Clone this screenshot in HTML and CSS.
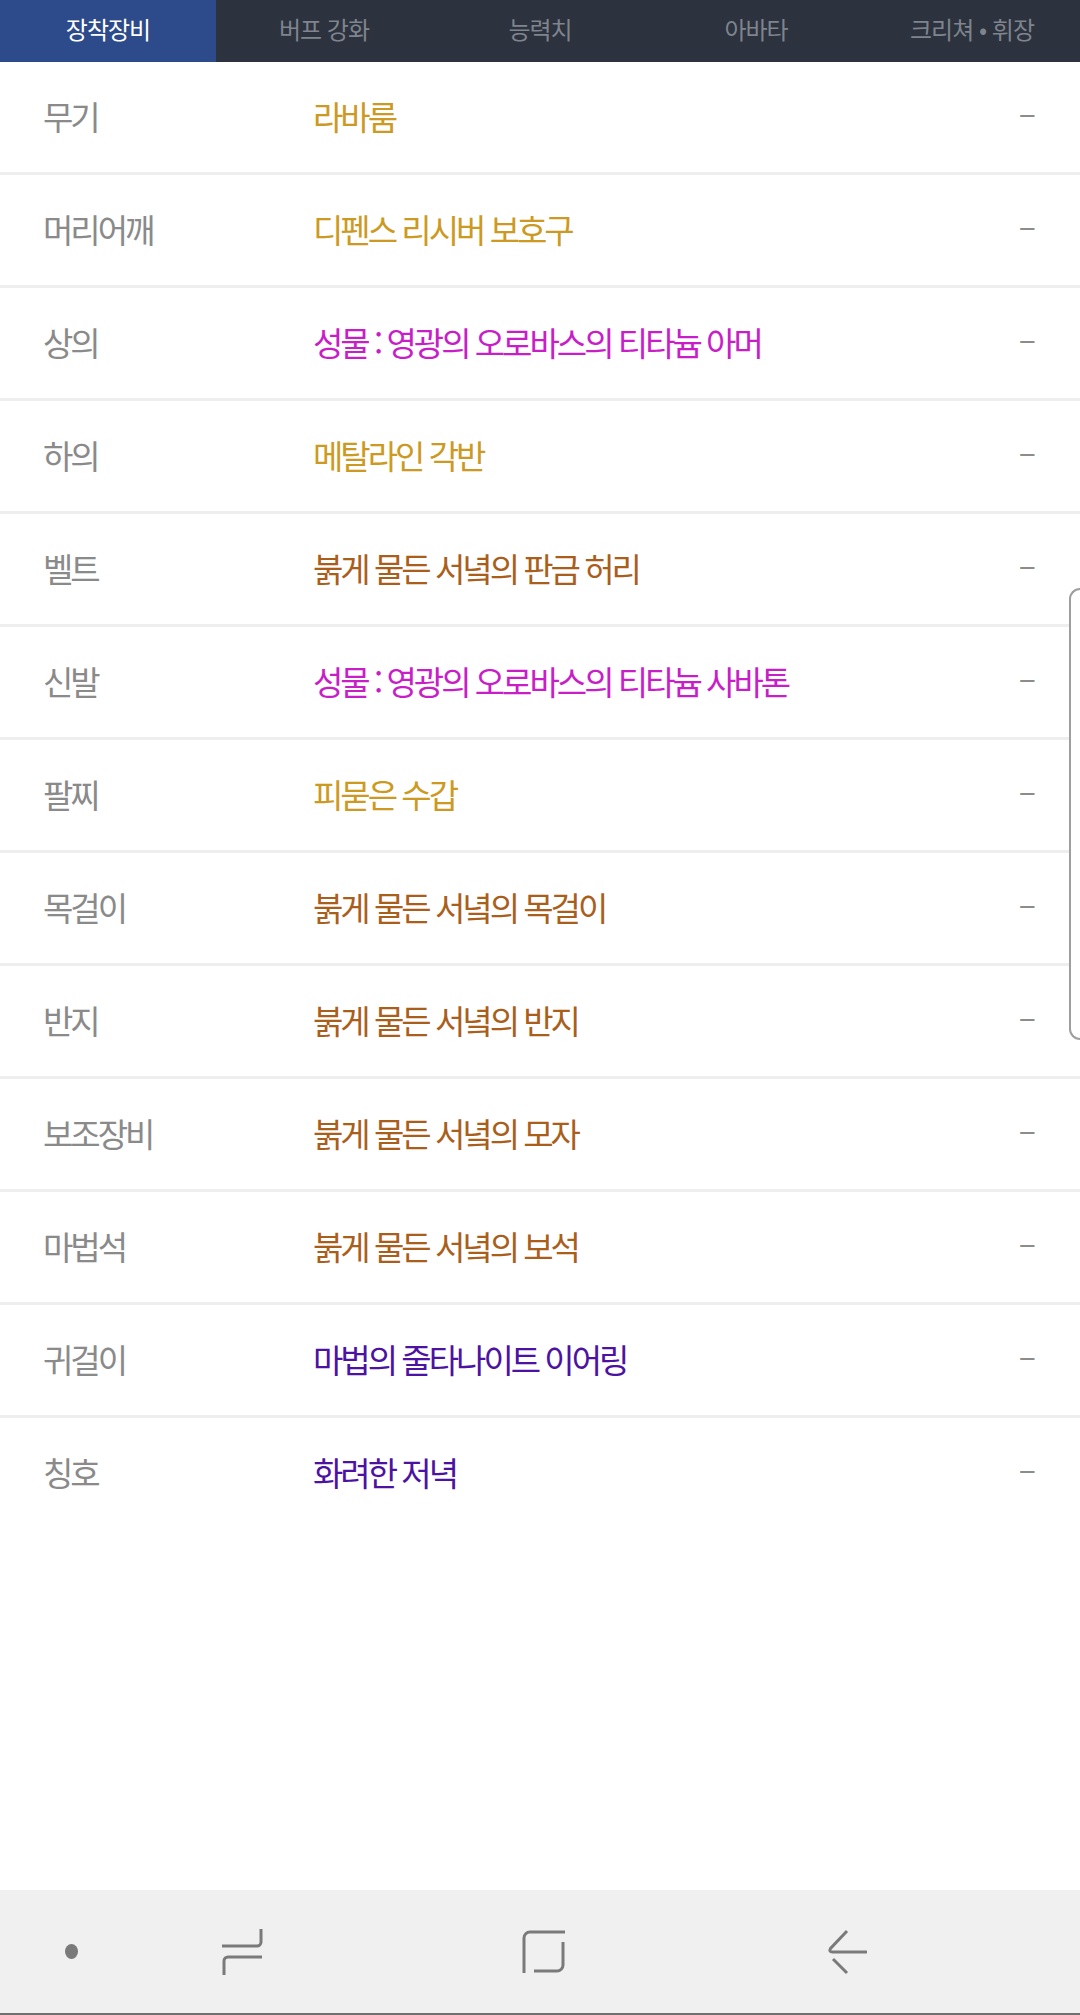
FILE: index.html
```html
<!DOCTYPE html>
<html lang="ko">
<head>
<meta charset="utf-8">
<title>장착장비</title>
<link rel="stylesheet" href="styles.css">
</head>
<body>
<div class="app">
  <nav class="tabs">
    <div class="tab active">장착장비</div>
    <div class="tab">버프 강화</div>
    <div class="tab">능력치</div>
    <div class="tab">아바타</div>
    <div class="tab">크리쳐 • 휘장</div>
  </nav>
  <div class="list">
    <div class="row"><span class="label">무기</span><span class="item unique">라바룸</span><span class="dash">–</span></div>
    <div class="row"><span class="label">머리어깨</span><span class="item unique">디펜스 리시버 보호구</span><span class="dash">–</span></div>
    <div class="row"><span class="label">상의</span><span class="item holy">성물 : 영광의 오로바스의 티타늄 아머</span><span class="dash">–</span></div>
    <div class="row"><span class="label">하의</span><span class="item unique">메탈라인 각반</span><span class="dash">–</span></div>
    <div class="row"><span class="label">벨트</span><span class="item legacy">붉게 물든 서녘의 판금 허리</span><span class="dash">–</span></div>
    <div class="row"><span class="label">신발</span><span class="item holy">성물 : 영광의 오로바스의 티타늄 사바톤</span><span class="dash">–</span></div>
    <div class="row"><span class="label">팔찌</span><span class="item unique">피묻은 수갑</span><span class="dash">–</span></div>
    <div class="row"><span class="label">목걸이</span><span class="item legacy">붉게 물든 서녘의 목걸이</span><span class="dash">–</span></div>
    <div class="row"><span class="label">반지</span><span class="item legacy">붉게 물든 서녘의 반지</span><span class="dash">–</span></div>
    <div class="row"><span class="label">보조장비</span><span class="item legacy">붉게 물든 서녘의 모자</span><span class="dash">–</span></div>
    <div class="row"><span class="label">마법석</span><span class="item legacy">붉게 물든 서녘의 보석</span><span class="dash">–</span></div>
    <div class="row"><span class="label">귀걸이</span><span class="item rare">마법의 줄타나이트 이어링</span><span class="dash">–</span></div>
    <div class="row last"><span class="label">칭호</span><span class="item rare">화려한 저녁</span><span class="dash">–</span></div>
  </div>
  <div class="spacer"></div>
  <div class="navbar">
    <span class="nav-dot"></span>
    <svg class="nav-recent" width="44" height="50" viewBox="0 0 44 50" fill="none" stroke="#7a7a7a" stroke-width="3">
      <path d="M41 2 V15 A4 4 0 0 1 37 19 H2"/>
      <path d="M42 30 H8 A4 4 0 0 0 4 34 V48"/>
    </svg>
    <svg class="nav-home" width="48" height="48" viewBox="0 0 48 48" fill="none" stroke="#7a7a7a" stroke-width="3">
      <path d="M4 45 V10 A6 6 0 0 1 10 4 H45"/>
      <path d="M43 14 V37 A6 6 0 0 1 37 43 H14"/>
    </svg>
    <svg class="nav-back" width="48" height="52" viewBox="0 0 48 52" fill="none" stroke="#7a7a7a" stroke-width="3">
      <path d="M23 5 L6.5 22.5 Q4.5 26 8.5 26 H43"/>
      <path d="M9 33 L23 47"/>
    </svg>
  </div>
  <div class="edge-handle"></div>
</div>
</body>
</html>
```
FILE: styles.css
```css
html, body {
  margin: 0;
  padding: 0;
  background: #ffffff;
}
body {
  font-family: "Noto Sans CJK KR", "Noto Sans", sans-serif;
  overflow: hidden;
}
.app {
  position: relative;
  width: 1080px;
  height: 2015px;
  display: flex;
  flex-direction: column;
}
.tabs {
  display: grid;
  grid-template-columns: repeat(5, 1fr);
  height: 62px;
  background: #2c323e;
}
.tab {
  display: flex;
  align-items: center;
  justify-content: center;
  color: #7f848d;
  font-size: 24px;
  letter-spacing: -1px;
  padding-bottom: 5px;
}
.tab.active {
  background: #2d4a8b;
  color: #ffffff;
}
.list {
  display: flex;
  flex-direction: column;
}
.row {
  display: flex;
  align-items: center;
  height: 110px;
  box-sizing: content-box;
  border-bottom: 3px solid #eeeeee;
  padding: 0 44px 0 43px;
  font-size: 33px;
  letter-spacing: -3px;
}
.row.last {
  border-bottom: none;
}
.label,
.item {
  margin-bottom: 3px;
}
.label {
  width: 270px;
  flex: none;
  color: #8a8a8a;
}
.item {
  flex: 1;
}
.unique { color: #cc9a22; }
.holy { color: #c81ec8; }
.legacy { color: #aa5e1c; }
.rare { color: #4c12a2; }
.dash {
  color: #8c8c8c;
  letter-spacing: 0;
  font-size: 32px;
  margin-bottom: 12px;
}
.spacer {
  flex: 1;
}
.navbar {
  height: 123px;
  background: #f0f0f0;
  border-bottom: 2px solid #707070;
  display: flex;
  align-items: center;
}
.nav-dot {
  width: 13px;
  height: 15px;
  border-radius: 50%;
  background: #7a7a7a;
  margin-left: 65px;
}
.nav-recent {
  margin-left: 142px;
}
.nav-home {
  margin-left: 256px;
}
.nav-back {
  margin-left: 256px;
}
.edge-handle {
  position: absolute;
  left: 1069px;
  top: 588px;
  width: 11px;
  height: 452px;
  box-sizing: border-box;
  border: 2px solid #9e9e9e;
  border-right: none;
  border-radius: 16px 0 0 16px;
  background: #ffffff;
}
```
